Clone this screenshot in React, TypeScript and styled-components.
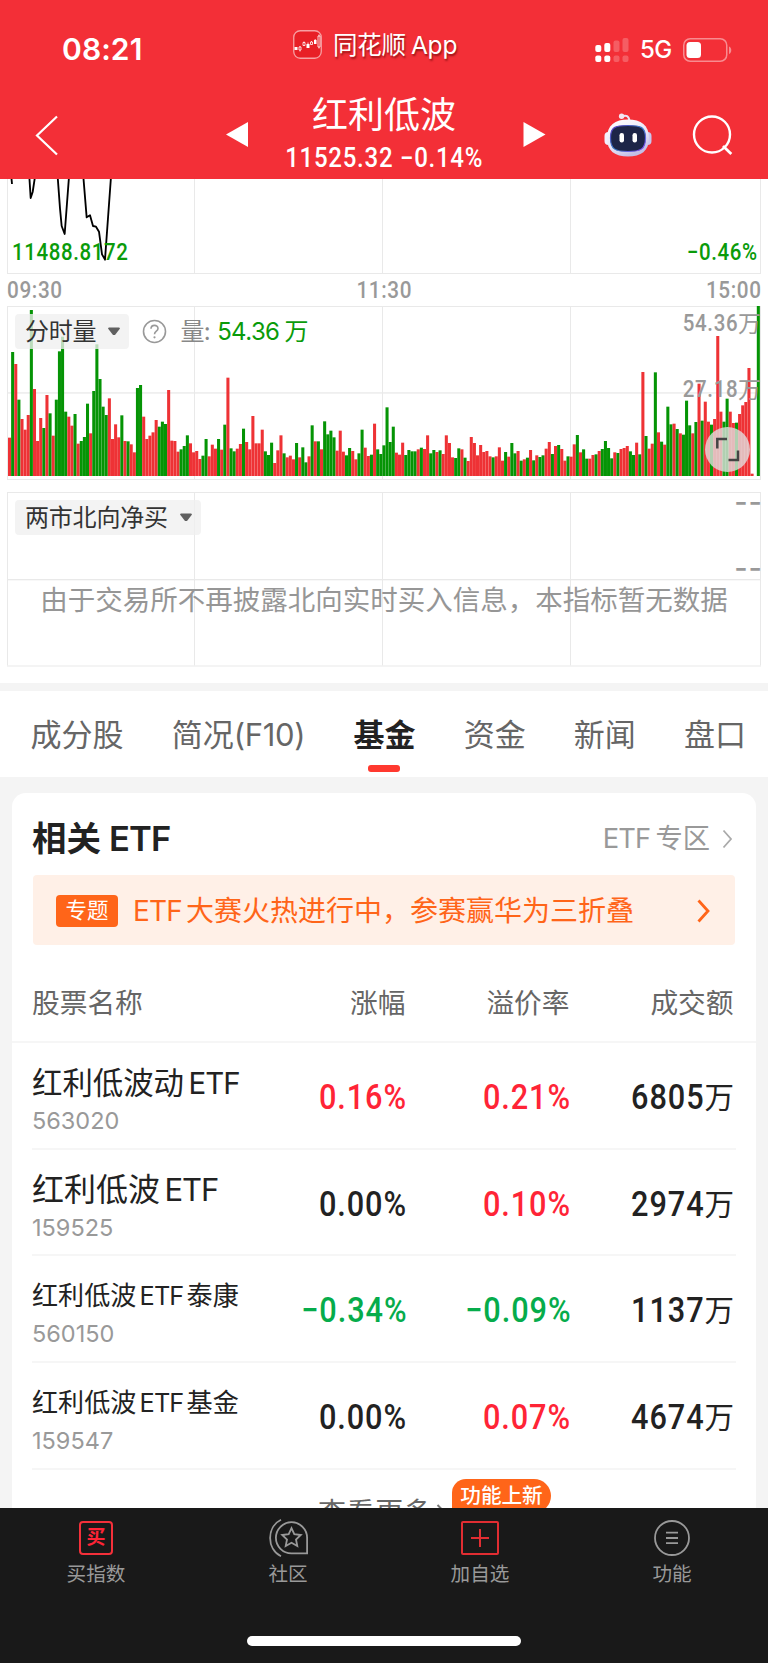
import React from "react";
import styled, { createGlobalStyle } from "styled-components";

const UI = `Inter, "Noto Sans CJK SC", sans-serif`;
const NUM = `Roboto, "Noto Sans CJK SC", sans-serif`;

const GlobalStyle = createGlobalStyle`
  *, *::before, *::after { box-sizing: border-box; }
  body { margin: 0; background: #f4f4f4; font-family: ${UI}; color: #222; text-autospace: no-autospace; }
  svg { display: block; }
`;

const Screen = styled.div`
  width: 768px;
  height: 1663px;
  overflow: hidden;
  display: flex;
  flex-direction: column;
  background: #f4f4f4;
`;

/* Narrow figures used for every quote, axis and percentage */
const Figures = styled.span<{ $from?: "left" | "center" | "right" }>`
  display: inline-block;
  font-family: ${NUM};
  letter-spacing: 0.03em;
  white-space: nowrap;
  transform: scaleX(0.89);
  transform-origin: ${(p) => p.$from ?? "left"} center;
`;

/* ---------- header ---------- */

const Header = styled.header`
  flex: none;
  height: 179px;
  background: #f32f37;
  color: #fff;
`;

const StatusBar = styled.div`
  height: 92px;
  display: grid;
  grid-template-columns: 293px 302px 1fr;
  align-items: start;
`;

const Clock = styled.div`
  padding: 29px 0 0 62px;
  font-size: 30px;
  font-weight: 600;
  line-height: 40px;
  letter-spacing: 0.1px;
`;

const AppTag = styled.div`
  margin-top: 30px;
  display: flex;
  gap: 11px;
  font-size: 24.5px;
  line-height: 30px;
  text-shadow: 1px 2px 2px rgba(90, 0, 0, 0.6);
`;

const AppName = styled.span`
  display: flex;
  gap: 5px;
  letter-spacing: -0.2px;
`;

const Signals = styled.div`
  margin-top: 36px;
  height: 27px;
  display: flex;
  align-items: center;
`;

const Network = styled.span`
  width: 43px;
  margin-left: 11px;
  font-size: 24px;
  font-weight: 500;
  line-height: 29px;
  letter-spacing: -0.5px;
`;

const NavBar = styled.div`
  height: 87px;
  display: grid;
  grid-template-columns: 226px 22px 274px 24px 58px 88px 1fr;
`;

const BackSlot = styled.div`
  padding: 23px 0 0 35px;
`;

const ArrowSlot = styled.div`
  padding-top: 30px;
`;

const RobotSlot = styled.div`
  grid-column: 6;
  padding-top: 20px;
`;

const SearchSlot = styled.div`
  padding-top: 22px;
`;

const Heading = styled.div`
  display: flex;
  flex-direction: column;
  align-items: center;
  padding-right: 2px;
`;

const IndexName = styled.div`
  height: 46px;
  font-size: 36px;
  line-height: 46px;
`;

const IndexQuote = styled(Figures)`
  font-size: 27px;
  font-weight: 500;
  line-height: 40px;
`;

/* ---------- charts ---------- */

const Charts = styled.section`
  flex: none;
  height: 504px;
  background: #fff;
`;

const Panel = styled.div<{ $h: number }>`
  position: relative;
  height: ${(p) => p.$h}px;
`;

const AxisRow = styled.div`
  height: 32px;
  padding: 0 6px 0 7px;
  display: grid;
  grid-template-columns: 1fr 1fr 1fr;
  font-size: 23.3px;
  font-weight: 500;
  line-height: 31px;
  color: #999;
  & > :nth-child(2) { text-align: center; }
  & > :nth-child(3) { text-align: right; }
`;

const PriceBounds = styled.div`
  position: absolute;
  inset: 57px 10px auto 12px;
  display: flex;
  justify-content: space-between;
  font-size: 23px;
  font-weight: 500;
  line-height: 33px;
  color: #0a9b0a;
`;

const PanelTools = styled.div<{ $top: number }>`
  position: absolute;
  left: 15px;
  top: ${(p) => p.$top}px;
  height: 35px;
  display: flex;
  align-items: center;
`;

const Picker = styled.div`
  height: 35px;
  padding: 0 9px 0 10px;
  display: flex;
  align-items: center;
  gap: 12px;
  border-radius: 4px;
  background: rgba(239, 239, 239, 0.78);
  font-size: 24px;
  line-height: 35px;
  letter-spacing: -0.2px;
  color: #333;
`;

const HelpIcon = styled.svg`
  margin-left: 13px;
`;

const VolumeNote = styled.div`
  margin-left: 13px;
  display: flex;
  font-size: 24px;
  line-height: 34px;
  letter-spacing: -0.6px;
  color: #888;
`;

const VolumeValue = styled.span`
  margin-left: 7px;
  display: flex;
  gap: 5px;
  color: #0a9b0a;
`;

const ScaleLabel = styled.div<{ $top: number }>`
  position: absolute;
  right: 7px;
  top: ${(p) => p.$top}px;
  display: flex;
  font-size: 23px;
  font-weight: 500;
  line-height: 30px;
  color: #999;
`;

const ScaleUnit = styled.span`
  font-weight: 400;
`;

const EmptyMark = styled(ScaleLabel)`
  right: 5px;
  font-size: 29px;
  letter-spacing: 1px;
`;

const ExpandButton = styled.div`
  position: absolute;
  left: 705px;
  top: 121px;
  width: 45px;
  height: 45px;
  border-radius: 50%;
  background: rgba(226, 226, 226, 0.78);
`;

const EmptyMessage = styled.div`
  position: absolute;
  left: 0;
  right: 0;
  top: 88px;
  text-align: center;
  font-size: 27.5px;
  line-height: 40px;
  color: #969696;
`;

/* ---------- tabs ---------- */

const TabBar = styled.nav`
  flex: none;
  height: 86px;
  margin-top: 8px;
  padding: 22px 0 0 30.5px;
  display: flex;
  gap: 48.2px;
  background: #fff;
  white-space: nowrap;
`;

const Tab = styled.div<{ $active?: boolean }>`
  display: flex;
  flex-direction: column;
  align-items: center;
  font-size: 31px;
  line-height: 44px;
  font-weight: ${(p) => (p.$active ? 700 : 400)};
  color: ${(p) => (p.$active ? "#222" : "#666")};
  &::after {
    content: "";
    width: 32px;
    height: 7px;
    margin-top: 8px;
    border-radius: 3px;
    background: ${(p) => (p.$active ? "#ff392f" : "transparent")};
  }
`;

const TabLatin = styled.span`
  letter-spacing: -0.3px;
`;

/* ---------- ETF card ---------- */

const Card = styled.section`
  flex: none;
  height: 715px;
  margin: 16px 12px 0;
  overflow: hidden;
  border-radius: 14px 14px 0 0;
  background: #fff;
`;

const CardHead = styled.div`
  height: 82px;
  padding: 10px 23px 0 20px;
  display: flex;
  align-items: center;
  justify-content: space-between;
`;

const CardTitle = styled.h2`
  margin: 0;
  display: flex;
  gap: 8px;
  font-size: 34.5px;
  font-weight: 600;
  line-height: 46px;
`;

const CardLink = styled.div`
  display: flex;
  align-items: center;
  gap: 5px;
  font-size: 27.3px;
  line-height: 40px;
  color: #999;
  svg { margin-left: 7px; }
`;

const Banner = styled.div`
  height: 70px;
  margin: 0 21px;
  padding: 1px 25px 0 23px;
  display: flex;
  align-items: center;
  border-radius: 4px;
  background: #fff0e7;
  color: #ff6519;
  font-size: 28px;
  line-height: 40px;
  white-space: nowrap;
`;

const BannerBadge = styled.span`
  width: 62px;
  height: 32px;
  margin-right: 15px;
  border-radius: 4px;
  background: #ff6519;
  color: #fff;
  font-size: 21.5px;
  line-height: 31px;
  text-align: center;
`;

const BannerText = styled.span`
  flex: 1;
  display: flex;
  gap: 4px;
`;

const Latin = styled.span<{ $ls?: number }>`
  letter-spacing: ${(p) => p.$ls ?? 0}px;
`;

const columns = "210px 1fr 164px 164px";

const TableHead = styled.div`
  height: 98px;
  padding: 18px 22.5px 0 20px;
  display: grid;
  grid-template-columns: ${columns};
  border-bottom: 2px solid #f6f6f6;
  font-size: 27.7px;
  line-height: 80px;
  color: #666;
  text-align: right;
  & > :first-child { text-align: left; }
`;

const Row = styled.div`
  height: 106.7px;
  margin: 0 20px;
  padding-right: 2px;
  display: grid;
  grid-template-columns: ${columns};
  border-bottom: 2px solid #f6f6f6;
`;

const Fund = styled.div`
  padding-top: 19px;
  white-space: nowrap;
`;

const FundName = styled.div<{ $size: number; $gap: number }>`
  height: 42px;
  display: flex;
  gap: ${(p) => p.$gap}px;
  font-size: ${(p) => p.$size}px;
  line-height: 42px;
  color: #222;
`;

const FundLatin = styled.span`
  font-size: 0.97em;
  letter-spacing: -0.035em;
`;

const FundCode = styled.div`
  font-size: 23.5px;
  line-height: 33px;
  color: #999;
`;

const tone = { up: "#ff2436", down: "#06ac4b", flat: "#222" };

const Value = styled.div<{ $tone: keyof typeof tone }>`
  display: flex;
  justify-content: flex-end;
  font-size: 34.5px;
  font-weight: 500;
  line-height: 109px;
  color: ${(p) => tone[p.$tone]};
`;

const Percent = styled(Figures)`
  margin-right: -1.2px;
`;

const Unit = styled.span`
  font-size: 29.5px;
  font-weight: 400;
`;

const More = styled.div`
  position: relative;
  padding: 23px 0 0 306px;
  display: flex;
  align-items: center;
  gap: 4px;
  font-size: 28px;
  line-height: 40px;
  letter-spacing: 0.6px;
  color: #666;
`;

const MoreBadge = styled.div`
  position: absolute;
  left: 440px;
  top: 9px;
  width: 99px;
  height: 34px;
  border-radius: 14px 17px 17px 0;
  background: #ff6519;
  color: #fff;
  font-size: 20.6px;
  font-weight: 500;
  line-height: 34px;
  letter-spacing: 0;
  text-align: center;
`;

/* ---------- footer ---------- */

const Footer = styled.footer`
  flex: none;
  height: 155px;
  background: #191919;
`;

const Actions = styled.div`
  height: 128px;
  display: grid;
  grid-template-columns: repeat(4, 1fr);
`;

const Action = styled.div`
  display: flex;
  flex-direction: column;
  align-items: center;
  padding-top: 10px;
  font-size: 19.6px;
  line-height: 30px;
  color: #999;
  svg { margin-bottom: 1px; }
`;

const BuyBox = styled.div`
  width: 34px;
  height: 34px;
  margin: 3px 0 4px;
  border: 2px solid #f5303a;
  border-radius: 4px;
  color: #ff2436;
  font-size: 19px;
  font-weight: 700;
  line-height: 30px;
  text-align: center;
`;

const HomeBar = styled.div`
  width: 274px;
  height: 10px;
  margin: 0 auto;
  border-radius: 5px;
  background: #fff;
`;

/* ---------- chart data ---------- */

const sessions = [
  {
    base: 918,
    bars:
      "R803 G546 R582 G689 R747 R779 R735 G420 R657 R813 R744 G774 R675 G730 R797 G689 G544 G500 G725 R740 " +
      "R767 G732 R821 G813 G801 G701 R790 G663 G523 G627 G710 G735 R685 R807 R763 R802 G736 R813 G814 R823 " +
      "R847 G654 G645 R740 R807 R797 R787 R750 G770 G755 G762 R660 R812 R813 R845 G838 G828 G796 R820 R847 " +
      "R843 R867 G857 G807 R859 R824 R836 G807 R839 G764 R623 G835 G844 R836 R822 G776 R816 R838 R738 R820",
  },
  {
    base: 558,
    bars:
      "R460 R419 G484 G495 G458 R519 R481 R436 G490 R502 R497 R508 G459 R502 G472 G517 R499 G406 R454 G454 " +
      "R478 G394 G433 G422 G442 R482 R422 R485 G496 G474 R483 R508 G490 G419 R473 R498 G494 R401 G478 G492 " +
      "G466 G352 G456 G410 R488 R494 R458 G495 G480 G484 G484 R478 G473 R477 R436 G490 G480 R486 G481 R492 " +
      "R436 R459 R502 G504 G475 R478 G503 R513 R441 R459 R496 R465 R486 R483 R499 G502 R499 R472 R512 G486 R500",
  },
  {
    base: 918,
    bars:
      "G819 G850 R843 G872 R868 G863 R840 G871 R856 G861 G856 R836 R816 G852 R828 G825 R837 R872 G859 R860 " +
      "R823 G795 R847 G838 G866 R866 R855 G853 R843 G837 G813 G834 G865 R847 G849 R837 R834 R828 G844 G855 " +
      "R818 G853 R606 G798 R836 R821 G607 R787 G815 R824 G710 G763 R761 G777 R790 G794 G692 G766 R790 G756 " +
      "R641 G752 R695 R755 G764 R747 R498 R725 G755 G686 R725 R759 G758 R732 R706 R696 R594 R911 R918 G408",
  },
];

const volumes = sessions.flatMap(({ base, bars }) =>
  bars.split(" ").map((b) => ({ up: b[0] === "R", h: (base - Number(b.slice(1))) / 3 }))
);

const Grid = ({ top, mid, bottom }: { top?: number; mid?: number; bottom: number }) => (
  <g fill="#e9e9e9">
    {[7, 194, 382, 570, 760].map((x) => (
      <rect key={x} x={x} y={top ?? 0} width="1" height={bottom - (top ?? 0)} />
    ))}
    {top !== undefined && <rect x="7" y={top} width="754" height="1" />}
    {mid !== undefined && <rect x="7" y={mid} width="754" height="1.3" />}
    <rect x="7" y={bottom} width="754" height="1" />
  </g>
);

const Caret = () => (
  <svg width="12" height="9" viewBox="0 0 12 9">
    <path d="M0.8 0.5H11.2L12 1.4L7 8H5L0 1.4Z" fill="#606060" />
  </svg>
);

const Robot = () => (
  <svg width="48" height="46" viewBox="0 0 48 46">
    <defs>
      <linearGradient id="shell" x1="0" y1="0" x2="0.5" y2="1">
        <stop offset="0" stopColor="#fff" />
        <stop offset="0.65" stopColor="#e9e6f6" />
        <stop offset="1" stopColor="#c3bfe6" />
      </linearGradient>
      <linearGradient id="rim" x1="0" y1="0" x2="1" y2="1">
        <stop offset="0" stopColor="#5b35c0" />
        <stop offset="0.5" stopColor="#3a80c8" />
        <stop offset="1" stopColor="#8a45f5" />
      </linearGradient>
    </defs>
    <path d="M18 4.5C22 2.5 25 4 25.5 9" fill="none" stroke="#e9e4f8" strokeWidth="2" />
    <circle cx="17.6" cy="4.2" r="2.7" fill="#f4e4f0" />
    <rect x="0.5" y="20" width="8" height="13" rx="4" fill="#f3f0fd" />
    <rect x="39.5" y="20" width="8" height="13" rx="4" fill="#c9c6ee" />
    <path d="M24 7.5C37 7.5 45 13 45 26C45 39 37 44.5 24 44.5C11 44.5 3 39 3 26C3 13 11 7.5 24 7.5Z" fill="url(#shell)" />
    <path d="M24 13.5C37 13.5 41.5 15 41.5 26C41.5 37 37 39.5 24 39.5C11 39.5 6.5 37 6.5 26C6.5 15 11 13.5 24 13.5Z" fill="#1d2547" stroke="url(#rim)" strokeWidth="1.2" />
    <rect x="15.5" y="21" width="4.5" height="9.5" rx="2.2" fill="#fff" />
    <rect x="28.5" y="21" width="4.5" height="9.5" rx="2.2" fill="#fff" />
  </svg>
);

const funds = [
  { cjk: "红利低波动", tail: "", size: 30.4, gap: 4.5, code: "563020", chg: "0.16%", ct: "up", prem: "0.21%", pt: "up", amt: "6805" },
  { cjk: "红利低波", tail: "", size: 32, gap: 4.5, code: "159525", chg: "0.00%", ct: "flat", prem: "0.10%", pt: "up", amt: "2974" },
  { cjk: "红利低波", tail: "泰康", size: 26.1, gap: 3.2, code: "560150", chg: "−0.34%", ct: "down", prem: "−0.09%", pt: "down", amt: "1137" },
  { cjk: "红利低波", tail: "基金", size: 26.1, gap: 3.2, code: "159547", chg: "0.00%", ct: "flat", prem: "0.07%", pt: "up", amt: "4674" },
] as const;

export default function App() {
  return (
    <Screen>
      <GlobalStyle />
      <Header>
        <StatusBar>
          <Clock>08:21</Clock>
          <AppTag>
            <svg width="29" height="29" viewBox="0 0 29 29">
              <rect x="0.75" y="0.75" width="27.5" height="27.5" rx="6.5" fill="#e81f26" stroke="#f7a0a3" strokeWidth="1.3" />
              <g fill="#fff">
                <rect x="1.5" y="17" width="3" height="3" />
                <rect x="13.5" y="14" width="3" height="4" />
                <rect x="21" y="10" width="2.5" height="4" />
              </g>
              <path
                d="M6 17h2v3h-2zM7 16v1M7 20v1.5M10 12.5h2v3h-2zM11 11.5v1M15 12.5v1.5M17.5 12h2v2.5h-2zM18.5 11v1M22.2 9v1M25 6h2v11h-2zM26 4.5v1.5M26 17v1.5"
                fill="none"
                stroke="#fff"
                strokeWidth="0.8"
              />
            </svg>
            <AppName>
              <span>同花顺</span>
              <span>App</span>
            </AppName>
          </AppTag>
          <Signals>
            <svg width="34" height="26" viewBox="0 0 34 26">
              <g fill="#fff">
                <rect x="0.3" y="8" width="6" height="7" rx="2" />
                <rect x="9.3" y="6" width="6" height="9" rx="2" />
                <rect x="0.3" y="18.5" width="6" height="6.5" rx="2" />
                <rect x="9.3" y="18.5" width="6" height="6.5" rx="2" />
              </g>
              <g fill="#fff" opacity="0.22">
                <rect x="18.5" y="3.5" width="6" height="11.5" rx="2" />
                <rect x="27.5" y="1" width="6" height="14" rx="2" />
                <rect x="18.5" y="18.5" width="6" height="6.5" rx="2" />
                <rect x="27.5" y="18.5" width="6" height="6.5" rx="2" />
              </g>
            </svg>
            <Network>5G</Network>
            <svg width="49" height="24" viewBox="0 0 49 24">
              <rect x="0.75" y="0.75" width="43" height="22.5" rx="6.5" fill="none" stroke="#fff" strokeOpacity="0.45" strokeWidth="1.5" />
              <rect x="3.5" y="4" width="14.5" height="16" rx="3.5" fill="#fff" />
              <path d="M46 8.5C49 9.5 49 15 46 16Z" fill="#fff" opacity="0.45" />
            </svg>
          </Signals>
        </StatusBar>
        <NavBar>
          <BackSlot>
            <svg width="24" height="42" viewBox="0 0 24 42">
              <path d="M22 1.5L2 20.5L22 39.5" fill="none" stroke="#fff" strokeWidth="2.2" />
            </svg>
          </BackSlot>
          <ArrowSlot>
            <svg width="22" height="25" viewBox="0 0 22 25">
              <path d="M0 12.5L22 0V25Z" fill="#fff" />
            </svg>
          </ArrowSlot>
          <Heading>
            <IndexName>红利低波</IndexName>
            <IndexQuote $from="center">11525.32 −0.14%</IndexQuote>
          </Heading>
          <ArrowSlot>
            <svg width="24" height="25" viewBox="0 0 24 25">
              <path d="M1.5 0L23.5 12.5L1.5 25Z" fill="#fff" />
            </svg>
          </ArrowSlot>
          <RobotSlot>
            <Robot />
          </RobotSlot>
          <SearchSlot>
            <svg width="42" height="42" viewBox="0 0 42 42">
              <circle cx="20" cy="20.5" r="18" fill="none" stroke="#fff" strokeWidth="2.4" />
              <path d="M31 32L39.3 40" stroke="#fff" strokeWidth="2.8" />
            </svg>
          </SearchSlot>
        </NavBar>
      </Header>

      <Charts>
        <Panel $h={95}>
          <svg width="768" height="95" viewBox="0 0 768 95">
            <Grid bottom={94} />
            <g transform="translate(0 -9) scale(0.33333)" fill="none" stroke="#000" strokeWidth="5.5" strokeLinejoin="round">
              <path d="M34 20L36 42" />
              <path d="M88 20L92 84L98 66L105 20" />
              <path d="M173 20L180 115L185 168L194 192L207 20" />
              <path d="M250 20L260 142L270 136L279 168L288 170L297 185L306 253L315 269L333 20" />
            </g>
          </svg>
          <PriceBounds>
            <Figures>11488.8172</Figures>
            <Figures $from="right">−0.46%</Figures>
          </PriceBounds>
        </Panel>
        <AxisRow>
          <div>
            <Figures>09:30</Figures>
          </div>
          <div>
            <Figures $from="center">11:30</Figures>
          </div>
          <div>
            <Figures $from="right">15:00</Figures>
          </div>
        </AxisRow>
        <Panel $h={186}>
          <svg width="768" height="180" viewBox="0 0 768 180">
            <Grid top={0} mid={86.3} bottom={173} />
            {volumes.map((v, i) => (
              <rect
                key={i}
                x={8 + i * 3.12}
                y={170 - v.h}
                width="3.05"
                height={v.h}
                fill={v.up ? "#ee3235" : "#059405"}
              />
            ))}
          </svg>
          <PanelTools $top={8}>
            <Picker>
              分时量
              <Caret />
            </Picker>
            <HelpIcon width="25" height="25" viewBox="0 0 25 25">
              <circle cx="12.5" cy="12.5" r="11" fill="none" stroke="#999" strokeWidth="1.6" />
              <path d="M9 9.8C9 5.2 16 5.3 16 9.6C16 12.3 12.5 12.2 12.5 15.3" fill="none" stroke="#999" strokeWidth="1.6" />
              <circle cx="12.5" cy="18.3" r="1.1" fill="#999" />
            </HelpIcon>
            <VolumeNote>
              量:
              <VolumeValue>
                <span>54.36</span>
                <span>万</span>
              </VolumeValue>
            </VolumeNote>
          </PanelTools>
          <ScaleLabel $top={3}>
            <Figures $from="right">54.36</Figures>
            <ScaleUnit>万</ScaleUnit>
          </ScaleLabel>
          <ScaleLabel $top={69}>
            <Figures $from="right">27.18</Figures>
            <ScaleUnit>万</ScaleUnit>
          </ScaleLabel>
          <ExpandButton>
            <svg width="45" height="45" viewBox="0 0 45 45" fill="none" stroke="#444" strokeWidth="2.5">
              <path d="M12.3 21.5V12H22M23.500 33H33V23.5" />
            </svg>
          </ExpandButton>
        </Panel>
        <Panel $h={191}>
          <svg width="768" height="180" viewBox="0 0 768 180">
            <Grid top={0} mid={87} bottom={173.5} />
          </svg>
          <PanelTools $top={8}>
            <Picker>
              两市北向净买
              <Caret />
            </Picker>
          </PanelTools>
          <EmptyMark $top={-5}>--</EmptyMark>
          <EmptyMark $top={61}>--</EmptyMark>
          <EmptyMessage>由于交易所不再披露北向实时买入信息，本指标暂无数据</EmptyMessage>
        </Panel>
      </Charts>

      <TabBar>
        <Tab>成分股</Tab>
        <Tab>
          <span>
            简况<TabLatin>(F10)</TabLatin>
          </span>
        </Tab>
        <Tab $active>基金</Tab>
        <Tab>资金</Tab>
        <Tab>新闻</Tab>
        <Tab>盘口</Tab>
      </TabBar>

      <Card>
        <CardHead>
          <CardTitle>
            <span>相关</span>
            <Latin $ls={-0.8}>ETF</Latin>
          </CardTitle>
          <CardLink>
            <Latin $ls={-0.8}>ETF</Latin>
            <span>专区</span>
            <svg width="11" height="20" viewBox="0 0 11 20">
              <path d="M1.5 1.5L9 10L1.5 18.5" fill="none" stroke="#aaa" strokeWidth="1.8" />
            </svg>
          </CardLink>
        </CardHead>
        <Banner>
          <BannerBadge>专题</BannerBadge>
          <BannerText>
            <Latin $ls={-0.8}>ETF</Latin>
            <span>大赛火热进行中，参赛赢华为三折叠</span>
          </BannerText>
          <svg width="13" height="24" viewBox="0 0 13 24">
            <path d="M1.5 1.5L11 12L1.5 22.5" fill="none" stroke="#ff6519" strokeWidth="2.8" />
          </svg>
        </Banner>
        <TableHead>
          <span>股票名称</span>
          <span>涨幅</span>
          <span>溢价率</span>
          <span>成交额</span>
        </TableHead>
        {funds.map((f) => (
          <Row key={f.code}>
            <Fund>
              <FundName $size={f.size} $gap={f.gap}>
                <span>{f.cjk}</span>
                <FundLatin>ETF</FundLatin>
                {f.tail && <span>{f.tail}</span>}
              </FundName>
              <FundCode>{f.code}</FundCode>
            </Fund>
            <Value $tone={f.ct}>
              <Percent $from="right">{f.chg}</Percent>
            </Value>
            <Value $tone={f.pt}>
              <Percent $from="right">{f.prem}</Percent>
            </Value>
            <Value $tone="flat">
              <Figures $from="right">{f.amt}</Figures>
              <Unit>万</Unit>
            </Value>
          </Row>
        ))}
        <More>
          查看更多
          <svg width="11" height="18" viewBox="0 0 11 18">
            <path d="M1.5 1L9.5 9L1.5 17" fill="none" stroke="#777" strokeWidth="2" />
          </svg>
          <MoreBadge>功能上新</MoreBadge>
        </More>
      </Card>

      <Footer>
        <Actions>
          <Action>
            <BuyBox>买</BuyBox>
            买指数
          </Action>
          <Action>
            <svg width="40" height="40" viewBox="0 0 40 40" fill="none" stroke="#999" strokeWidth="1.8">
              <path d="M23.5 4.2A15.6 15.6 0 1 0 23.5 35.4H39.1V19.8A15.6 15.6 0 0 0 23.5 4.2Z" />
              <path d="M13 1.8C-1.5 9 -1.5 31 13 38.2" />
              <path d="M23.5 10.2L26.3 16.2L32.8 17L28 21.5L29.3 28L23.5 24.8L17.7 28L19 21.5L14.2 17L20.7 16.2Z" />
            </svg>
            社区
          </Action>
          <Action>
            <svg width="40" height="40" viewBox="0 0 40 40" fill="none" stroke="#e12d32" strokeWidth="2">
              <rect x="2" y="4" width="36" height="32" rx="1" />
              <path d="M11 20H29M20 11V29" />
            </svg>
            加自选
          </Action>
          <Action>
            <svg width="40" height="40" viewBox="0 0 40 40" fill="none" stroke="#999" strokeWidth="1.8">
              <circle cx="20" cy="20" r="17" />
              <path d="M14 14.7H26M14 20H26M14 25.2H26" />
            </svg>
            功能
          </Action>
        </Actions>
        <HomeBar />
      </Footer>
    </Screen>
  );
}
